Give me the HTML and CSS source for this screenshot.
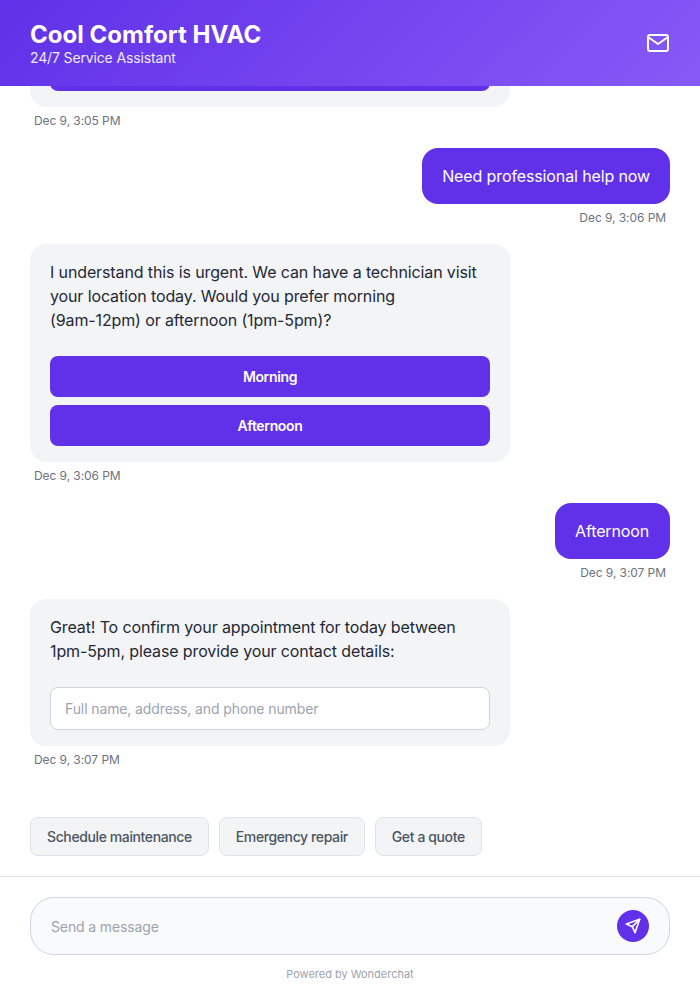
FILE: index.html
```html
<!DOCTYPE html>
<html lang="en">

    <head>
        <meta charset="UTF-8">
        <meta name="viewport" content="width=device-width, initial-scale=1.0">
        <title>Cool Comfort HVAC</title>

        <link rel="stylesheet" href="styles.css">
    </head>

    <body>
        <div class="chat">
            <header class="chat-header">
                <div>
                    <h1>Cool Comfort HVAC</h1>
                    <p>24/7 Service Assistant</p>
                </div>
                <svg class="mail-icon" width="24" height="24" viewBox="0 0 24 24" fill="none" stroke="currentColor" stroke-width="2" stroke-linecap="round" stroke-linejoin="round">
                    <path d="M4 4h16c1.1 0 2 .9 2 2v12c0 1.1-.9 2-2 2H4c-1.1 0-2-.9-2-2V6c0-1.1.9-2 2-2z"></path>
                    <polyline points="22,6 12,13 2,6"></polyline>
                </svg>
            </header>

            <main class="messages">
                <div class="message bot">
                    <div class="bubble">
                        <div class="options">
                            <button class="option"></button>
                        </div>
                    </div>
                    <span class="time">Dec 9, 3:05 PM</span>
                </div>
                <div class="message user">
                    <div class="bubble">Need professional help now</div>
                    <span class="time">Dec 9, 3:06 PM</span>
                </div>
                <div class="message bot">
                    <div class="bubble">
                        <p>I understand this is urgent. We can have a technician visit your location today. Would you prefer morning<br>(9am-12pm) or afternoon (1pm-5pm)?</p>
                        <div class="options">
                            <button class="option">Morning</button>
                            <button class="option">Afternoon</button>
                        </div>
                    </div>
                    <span class="time">Dec 9, 3:06 PM</span>
                </div>
                <div class="message user">
                    <div class="bubble">Afternoon</div>
                    <span class="time">Dec 9, 3:07 PM</span>
                </div>
                <div class="message bot">
                    <div class="bubble">
                        <p>Great! To confirm your appointment for today between 1pm-5pm, please provide your contact details:</p>
                        <input class="contact-input" type="text" placeholder="Full name, address, and phone number">
                    </div>
                    <span class="time">Dec 9, 3:07 PM</span>
                </div>
            </main>

            <div class="quick-replies">
                <button class="chip">Schedule maintenance</button>
                <button class="chip">Emergency repair</button>
                <button class="chip">Get a quote</button>
            </div>

            <footer class="composer">
                <div class="composer-box">
                    <input class="composer-input" type="text" placeholder="Send a message">
                    <button class="send">
                        <svg width="16" height="16" viewBox="0 0 24 24" fill="none" stroke="currentColor" stroke-width="2.4" stroke-linecap="round" stroke-linejoin="round">
                            <line x1="22" y1="2" x2="11" y2="13"></line>
                            <polygon points="22 2 15 22 11 13 2 9 22 2"></polygon>
                        </svg>
                    </button>
                </div>
                <p class="powered">Powered by Wonderchat</p>
            </footer>
        </div>
    </body>

</html>
```

FILE: styles.css
```css
* {
    box-sizing: border-box;
    margin: 0;
    padding: 0;
}

body {
    font-family: Inter, sans-serif;
    background-color: #fff;
}

button,
input {
    font-family: inherit;
    font-size: 14px;
}

.chat {
    display: flex;
    flex-direction: column;
    height: 100vh;
    overflow: hidden;
}

.chat-header {
    display: flex;
    align-items: center;
    justify-content: space-between;
    flex-shrink: 0;
    height: 86px;
    padding: 0 30px;
    background: linear-gradient(135deg, #6030e8 0%, #8859f6 100%);
    color: #fff;
}

.chat-header h1 {
    font-size: 24px;
    font-weight: 700;
    line-height: 29px;
    letter-spacing: 0.02px;
}

.chat-header p {
    font-size: 14px;
    line-height: 17px;
    letter-spacing: -0.14px;
    opacity: 0.9;
}

.messages {
    display: flex;
    flex: 1;
    flex-direction: column;
    justify-content: flex-end;
    gap: 19px;
    min-height: 0;
    padding: 0 30px 49.5px;
    overflow: hidden;
}

.message {
    display: flex;
    flex-direction: column;
    flex-shrink: 0;
    gap: 7px;
    align-items: flex-start;
}

.message.user {
    align-items: flex-end;
}

.bubble {
    padding: 16px 20px;
    border-radius: 16px;
    font-size: 16px;
    line-height: 24px;
    letter-spacing: -0.12px;
}

.bot .bubble {
    width: 480px;
    background-color: #f3f4f6;
    color: #1f2937;
}

.user .bubble {
    min-width: 115px;
    background-color: #6131e9;
    color: #fff;
}

.time {
    padding: 0 4px;
    font-size: 12px;
    line-height: 14.5px;
    letter-spacing: -0.07px;
    color: #6b7280;
}

.options {
    display: flex;
    flex-direction: column;
    gap: 8px;
    margin-top: 24px;
}

.option {
    height: 41px;
    border: none;
    border-radius: 8px;
    background-color: #6131e9;
    color: #fff;
    font-weight: 600;
    letter-spacing: -0.35px;
    cursor: pointer;
}

.contact-input {
    display: block;
    width: 100%;
    height: 43px;
    margin-top: 24px;
    padding: 0 14px;
    border: 1px solid #d1d3e0;
    border-radius: 8px;
    background-color: #fff;
    letter-spacing: -0.11px;
}

input::placeholder {
    color: #9ca3af;
}

.quick-replies {
    display: flex;
    flex-shrink: 0;
    gap: 10px;
    padding: 0 30px 20px;
}

.chip {
    height: 39px;
    padding: 0 16px;
    border: 1px solid #e2e2ee;
    border-radius: 8px;
    background-color: #f3f4f6;
    color: #4b5563;
    font-weight: 500;
    letter-spacing: -0.39px;
    cursor: pointer;
}

.composer {
    flex-shrink: 0;
    height: 124px;
    padding: 20px 30px 0;
    border-top: 1px solid #e2e2ee;
}

.composer-box {
    display: flex;
    align-items: center;
    height: 58px;
    padding: 0 20px;
    border: 1px solid #d1d3e0;
    border-radius: 24px;
    background-color: #f9fafb;
}

.composer-input {
    flex: 1;
    border: none;
    outline: none;
    background: transparent;
    letter-spacing: -0.13px;
}

.send {
    display: flex;
    align-items: center;
    justify-content: center;
    width: 32px;
    height: 32px;
    border: none;
    border-radius: 50%;
    background-color: #6131e9;
    color: #fff;
    cursor: pointer;
}

.powered {
    margin-top: 12px;
    font-size: 11px;
    line-height: 14px;
    letter-spacing: -0.01px;
    text-align: center;
    color: #9ca3af;
}
```
